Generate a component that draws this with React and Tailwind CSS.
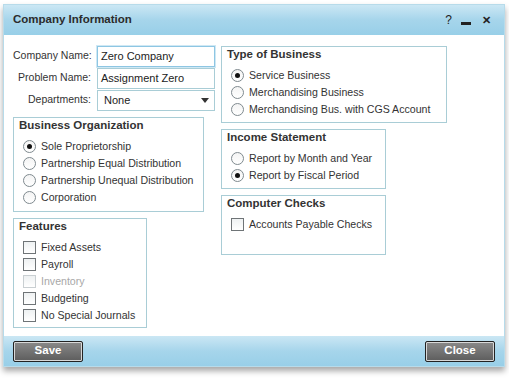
import React, { useState } from 'react';

const FONT = { fontFamily: '"Liberation Sans", Arial, sans-serif' };

function Radio({ checked, label, onClick }) {
  return (
    <div className="flex items-center h-[17px] cursor-default" onClick={onClick}>
      <span className="w-[13px] h-[13px] rounded-full border border-[#7f8a8f] bg-gradient-to-b from-[#f4f4f4] to-white flex items-center justify-center shrink-0">
        {checked && <span className="w-[5px] h-[5px] rounded-full bg-[#111]" />}
      </span>
      <span className="ml-[5px] text-[10.6px] text-[#333] whitespace-nowrap">{label}</span>
    </div>
  );
}

function Check({ checked, label, disabled, onClick }) {
  return (
    <div className="flex items-center h-[17px] cursor-default" onClick={disabled ? undefined : onClick}>
      <span
        className={`w-[13px] h-[13px] border shrink-0 flex items-center justify-center bg-gradient-to-b from-[#eef1f2] to-white ${
          disabled ? 'border-[#c9cfd2]' : 'border-[#6f7477]'
        }`}
      >
        {checked && <span className="text-[10px] leading-none text-[#111]">✓</span>}
      </span>
      <span className={`ml-[5px] text-[10.6px] whitespace-nowrap ${disabled ? 'text-[#a8a8a8]' : 'text-[#333]'}`}>{label}</span>
    </div>
  );
}

function Group({ title, className = '', children }) {
  return (
    <div className={`border border-[#a9cdd6] ${className}`}>
      <div className="pl-[5px] h-[16px] flex items-center text-[11.5px] font-bold text-[#333]">{title}</div>
      <div className="pl-[9px] pt-[4px]">{children}</div>
    </div>
  );
}

function Button({ children }) {
  return (
    <button className="h-[21px] w-[70px] rounded-[2px] border border-[#222] bg-gradient-to-b from-[#8a8a8a] to-[#5d5d5d] shadow-[inset_0_0_0_1px_#d8d8d8] text-white text-[11.5px] font-bold">
      {children}
    </button>
  );
}

export default function App() {
  const [org, setOrg] = useState('sole');
  const [type, setType] = useState('service');
  const [income, setIncome] = useState('fiscal');
  const [features, setFeatures] = useState({ fixed: false, payroll: false, budgeting: false, none: false });
  const [apChecks, setApChecks] = useState(false);

  const toggle = (k) => setFeatures((f) => ({ ...f, [k]: !f[k] }));

  return (
    <div className="w-[509px] h-[378px] bg-white pt-[4px] pl-[3px]" style={FONT}>
      <div className="w-[502px] shadow-[0_4px_6px_rgba(0,0,0,0.35)]">
        {/* title bar */}
        <div className="h-[31px] flex items-center px-[9px] border border-b-0 border-[#b7dbea] bg-gradient-to-b from-[#cbe7f4] via-[#a6d5eb] to-[#98cfe8]">
          <div className="text-[11.5px] font-bold text-[#2b2b2b] flex-1">Company Information</div>
          <div className="flex items-center text-[#222] pr-[4px]">
            <span className="text-[12px]">?</span>
            <span className="ml-[9px] w-[10px] h-[3px] bg-[#222] mt-[6px]" />
            <span className="ml-[11px] text-[11px] font-bold leading-none">✕</span>
          </div>
        </div>

        {/* body */}
        <div className="h-[301px] bg-white border-x border-[#b7dbea] flex pl-[9px] pt-[10px]">
          <div className="w-[202px] flex flex-col">
            <div className="flex items-center h-[22px]">
              <span className="w-[78px] text-right text-[10.5px] text-[#333] whitespace-nowrap">Company Name:</span>
              <span className="ml-[6px] w-[118px] h-[21px] border border-[#8ec6e3] shadow-[0_0_0_1px_#cfe8f4] flex items-center px-[3px] text-[11px] text-[#222]">
                Zero Company
              </span>
            </div>
            <div className="flex items-center h-[22px]">
              <span className="w-[78px] text-right text-[10.5px] text-[#333] whitespace-nowrap">Problem Name:</span>
              <span className="ml-[6px] w-[118px] h-[21px] border border-[#a9cdd6] flex items-center px-[3px] text-[11px] text-[#222]">
                Assignment Zero
              </span>
            </div>
            <div className="flex items-center h-[22px]">
              <span className="w-[78px] text-right text-[10.5px] text-[#333] whitespace-nowrap">Departments:</span>
              <span className="ml-[6px] w-[118px] h-[21px] border border-[#a9cdd6] flex items-center pl-[6px] pr-[5px] text-[11px] text-[#222]">
                <span className="flex-1">None</span>
                <svg width="8" height="5" viewBox="0 0 8 5"><path d="M0 0h8L4 5z" fill="#333" /></svg>
              </span>
            </div>

            <Group title="Business Organization" className="mt-[6px] w-[191px] h-[95px]">
              <Radio checked={org === 'sole'} onClick={() => setOrg('sole')} label="Sole Proprietorship" />
              <Radio checked={org === 'eq'} onClick={() => setOrg('eq')} label="Partnership Equal Distribution" />
              <Radio checked={org === 'uneq'} onClick={() => setOrg('uneq')} label="Partnership Unequal Distribution" />
              <Radio checked={org === 'corp'} onClick={() => setOrg('corp')} label="Corporation" />
            </Group>

            <Group title="Features" className="mt-[6px] w-[134px] h-[110px]">
              <Check checked={features.fixed} onClick={() => toggle('fixed')} label="Fixed Assets" />
              <Check checked={features.payroll} onClick={() => toggle('payroll')} label="Payroll" />
              <Check disabled label="Inventory" />
              <Check checked={features.budgeting} onClick={() => toggle('budgeting')} label="Budgeting" />
              <Check checked={features.none} onClick={() => toggle('none')} label="No Special Journals" />
            </Group>
          </div>

          <div className="ml-[6px] flex flex-col pt-[1px]">
            <Group title="Type of Business" className="w-[226px] h-[77px]">
              <Radio checked={type === 'service'} onClick={() => setType('service')} label="Service Business" />
              <Radio checked={type === 'merch'} onClick={() => setType('merch')} label="Merchandising Business" />
              <Radio checked={type === 'cgs'} onClick={() => setType('cgs')} label="Merchandising Bus. with CGS Account" />
            </Group>
            <Group title="Income Statement" className="mt-[6px] w-[165px] h-[60px]">
              <Radio checked={income === 'month'} onClick={() => setIncome('month')} label="Report by Month and Year" />
              <Radio checked={income === 'fiscal'} onClick={() => setIncome('fiscal')} label="Report by Fiscal Period" />
            </Group>
            <Group title="Computer Checks" className="mt-[6px] w-[165px] h-[60px]">
              <Check checked={apChecks} onClick={() => setApChecks(!apChecks)} label="Accounts Payable Checks" />
            </Group>
          </div>
        </div>

        {/* footer */}
        <div className="h-[31px] flex items-center justify-between px-[9px] border border-t-0 border-[#b7dbea] bg-gradient-to-b from-[#cbe7f4] via-[#a6d5eb] to-[#98cfe8]">
          <Button>Save</Button>
          <Button>Close</Button>
        </div>
      </div>
    </div>
  );
}
